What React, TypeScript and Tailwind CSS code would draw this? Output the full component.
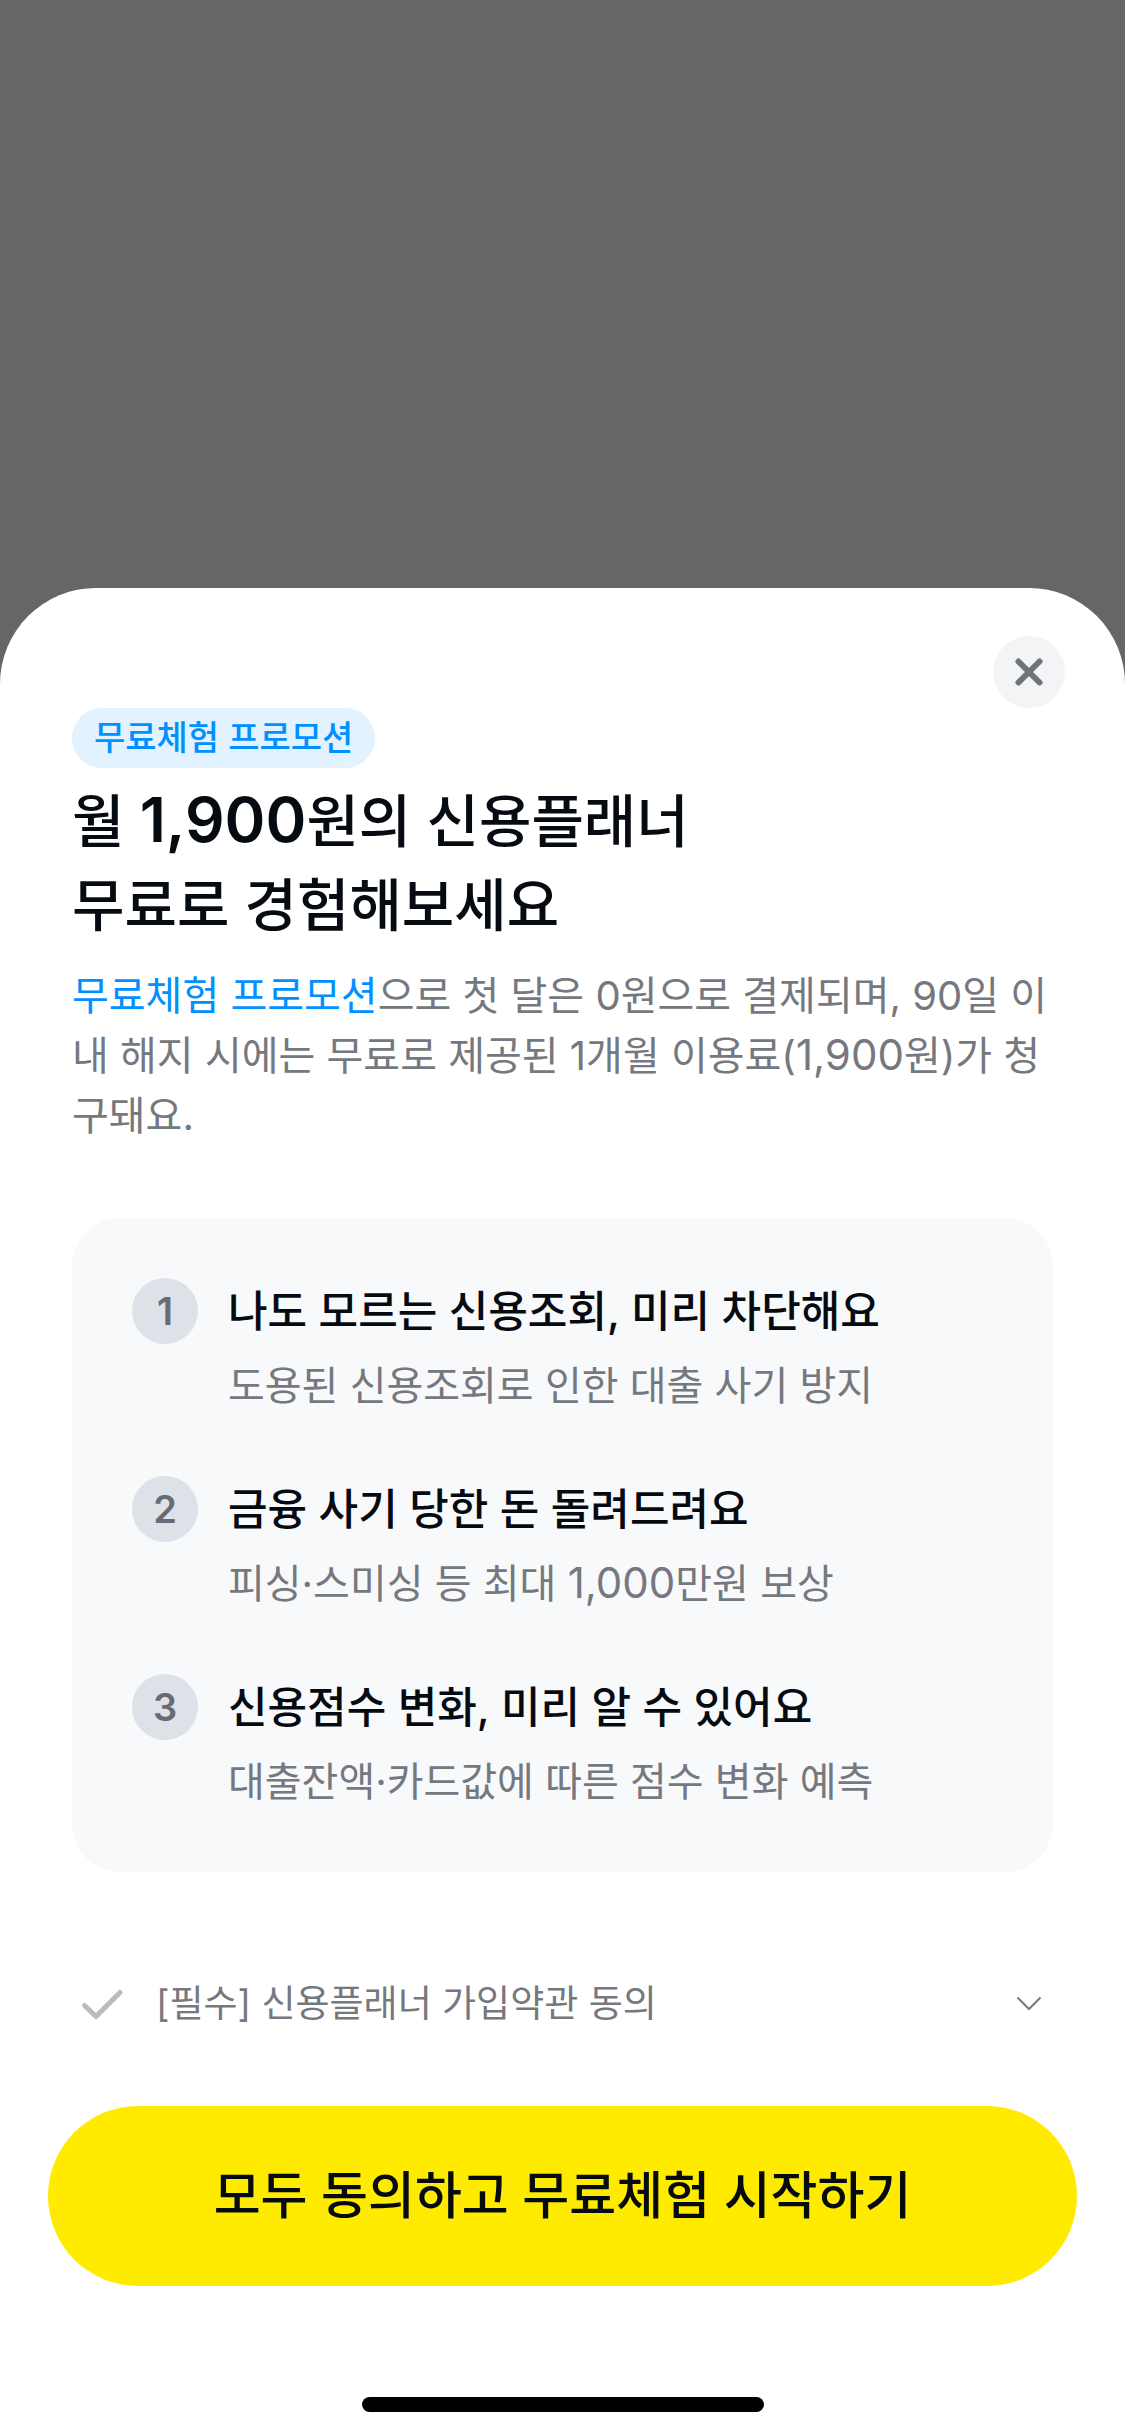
import React, { useState } from 'react';

interface Benefit {
  title: string;
  description: React.ReactNode;
}

/** Amount inside body copy, set slightly larger than the Hangul around it. */
const Amount = ({ children }: { children: string }) => (
  <span className="text-[42px] leading-none">{children}</span>
);

const BENEFITS: Benefit[] = [
  { title: '나도 모르는 신용조회, 미리 차단해요', description: '도용된 신용조회로 인한 대출 사기 방지' },
  { title: '금융 사기 당한 돈 돌려드려요', description: <>피싱·스미싱 등 최대 <Amount>1,000</Amount>만원 보상</> },
  { title: '신용점수 변화, 미리 알 수 있어요', description: '대출잔액·카드값에 따른 점수 변화 예측' },
];

const CloseIcon = () => (
  <svg className="size-[72px]" viewBox="0 0 72 72" fill="none" stroke="currentColor" strokeWidth="6" strokeLinecap="round" aria-hidden="true">
    <path d="M25.5 25.5l21 21M46.5 25.5l-21 21" />
  </svg>
);

const CheckIcon = () => (
  <svg className="size-[60px]" viewBox="0 0 60 60" fill="none" stroke="currentColor" strokeWidth="5" strokeLinecap="round" strokeLinejoin="round" aria-hidden="true">
    <path d="M12.5 31.5L24 42.5L48 18.5" />
  </svg>
);

const ChevronIcon = () => (
  <svg className="size-[48px]" viewBox="0 0 48 48" fill="none" stroke="currentColor" strokeWidth="2" aria-hidden="true">
    <path d="M12.5 17.5L24 29L35.5 17.5" />
  </svg>
);

/** One numbered row inside the benefit card. */
const BenefitRow: React.FC<{ index: number; benefit: Benefit }> = ({ index, benefit }) => (
  <li className="flex items-start gap-[30px]">
    <span className="flex size-[66px] shrink-0 items-center justify-center rounded-full bg-[#dde1e8] text-[38px] font-semibold text-[#686b73]">
      {index}
    </span>
    <div className="flex flex-col gap-3">
      <h2 className="text-[43px] leading-[66px] font-medium text-[#060b11]">{benefit.title}</h2>
      <p className="text-[40px] leading-[60px] text-[#75787e]">{benefit.description}</p>
    </div>
  </li>
);

export default function App() {
  const [agreed, setAgreed] = useState(false);

  return (
    <div className="flex min-h-screen flex-col justify-end bg-[#666666] font-['Inter','Noto_Sans_CJK_KR',sans-serif]" lang="ko">
      <main role="dialog" aria-labelledby="sheet-title" className="rounded-t-[96px] bg-white pt-12 pb-6">
        <div className="flex justify-end px-[60px]">
          <button type="button" aria-label="닫기" className="rounded-full bg-[#f2f4f6] text-[#707379]">
            <CloseIcon />
          </button>
        </div>

        <section className="px-[72px]">
          <span className="inline-block rounded-full bg-[#e2f3ff] px-[22px] align-top text-[34px] leading-[60px] font-medium text-[#0090ff]">
            무료체험 프로모션
          </span>
          <h1 id="sheet-title" className="mt-3 text-[57px] leading-[84px] font-medium text-[#060b11]">
            월 <span className="text-[62px] leading-none font-semibold">1,900</span>원의 신용플래너
            <br />
            무료로 경험해보세요
          </h1>
          <p className="mt-[18px] text-[40px] leading-[60px] text-[#75787e]">
            <span className="text-[#0090ff]">무료체험 프로모션</span>으로 첫 달은 0원으로 결제되며, 90일 이내 해지 시에는 무료로 제공된 1개월 이용료(<Amount>1,900</Amount>원)가 청구돼요.
          </p>

          <ol className="mt-[72px] flex flex-col gap-[60px] rounded-[48px] bg-[#f8f9fb] p-[60px]">
            {BENEFITS.map((benefit, idx) => (
              <BenefitRow key={benefit.title} index={idx + 1} benefit={benefit} />
            ))}
          </ol>
        </section>

        <div className="mt-[102px] flex items-center justify-between px-[72px]">
          <label className="flex items-center gap-6 text-[37px] leading-[60px] text-[#75787e]">
            <input type="checkbox" className="peer sr-only" checked={agreed} onChange={(e) => setAgreed(e.target.checked)} />
            <span className="text-[#b9bbbe] peer-checked:text-[#0090ff]">
              <CheckIcon />
            </span>
            [필수] 신용플래너 가입약관 동의
          </label>
          <button type="button" aria-label="약관 펼치기" className="text-[#75787e]">
            <ChevronIcon />
          </button>
        </div>

        <div className="mt-[72px] px-12">
          <button type="button" className="h-[180px] w-full rounded-full bg-[#ffeb00] text-[51px] font-medium text-[#060b11]">
            모두 동의하고 무료체험 시작하기
          </button>
        </div>

        {/* home indicator */}
        <div className="mx-auto mt-[111px] h-[15px] w-[402px] rounded-full bg-black" />
      </main>
    </div>
  );
}
